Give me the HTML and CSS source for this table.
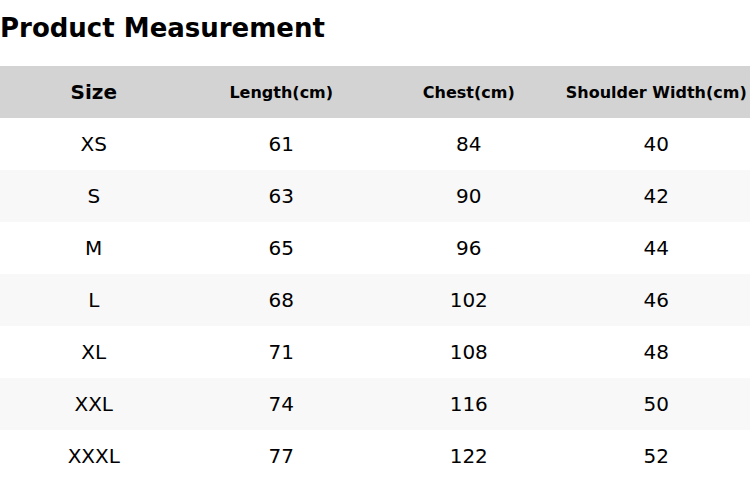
FILE: index.html
```html
<!DOCTYPE html>
<html>
<head>
<meta charset="utf-8">
<link rel="stylesheet" href="styles.css">
</head>
<body>
<h1 class="title">Product Measurement</h1>
<table class="size-table">
  <thead>
    <tr><th class="size-head">Size</th><th>Length(cm)</th><th>Chest(cm)</th><th>Shoulder Width(cm)</th></tr>
  </thead>
  <tbody>
    <tr><td>XS</td><td>61</td><td>84</td><td>40</td></tr>
    <tr><td>S</td><td>63</td><td>90</td><td>42</td></tr>
    <tr><td>M</td><td>65</td><td>96</td><td>44</td></tr>
    <tr><td>L</td><td>68</td><td>102</td><td>46</td></tr>
    <tr><td>XL</td><td>71</td><td>108</td><td>48</td></tr>
    <tr><td>XXL</td><td>74</td><td>116</td><td>50</td></tr>
    <tr><td>XXXL</td><td>77</td><td>122</td><td>52</td></tr>
  </tbody>
</table>
</body>
</html>
```
FILE: styles.css
```css
html, body {
  margin: 0;
  padding: 0;
  background: #fff;
  font-family: "DejaVu Sans", sans-serif;
  color: #000;
}
.title {
  margin: 0;
  height: 66px;
  padding-top: 12px;
  box-sizing: border-box;
  font-size: 26px;
  line-height: 32px;
  font-weight: bold;
}
.size-table {
  width: 750px;
  border-collapse: collapse;
  table-layout: fixed;
}
.size-table th,
.size-table td {
  height: 52px;
  padding: 0;
  text-align: center;
  vertical-align: middle;
}
.size-table th {
  background: #d3d3d3;
  font-size: 16px;
  font-weight: bold;
}
.size-table th.size-head {
  font-size: 20px;
}
.size-table td {
  font-size: 20px;
}
.size-table tbody tr:nth-child(even) {
  background: #f8f8f8;
}
```
